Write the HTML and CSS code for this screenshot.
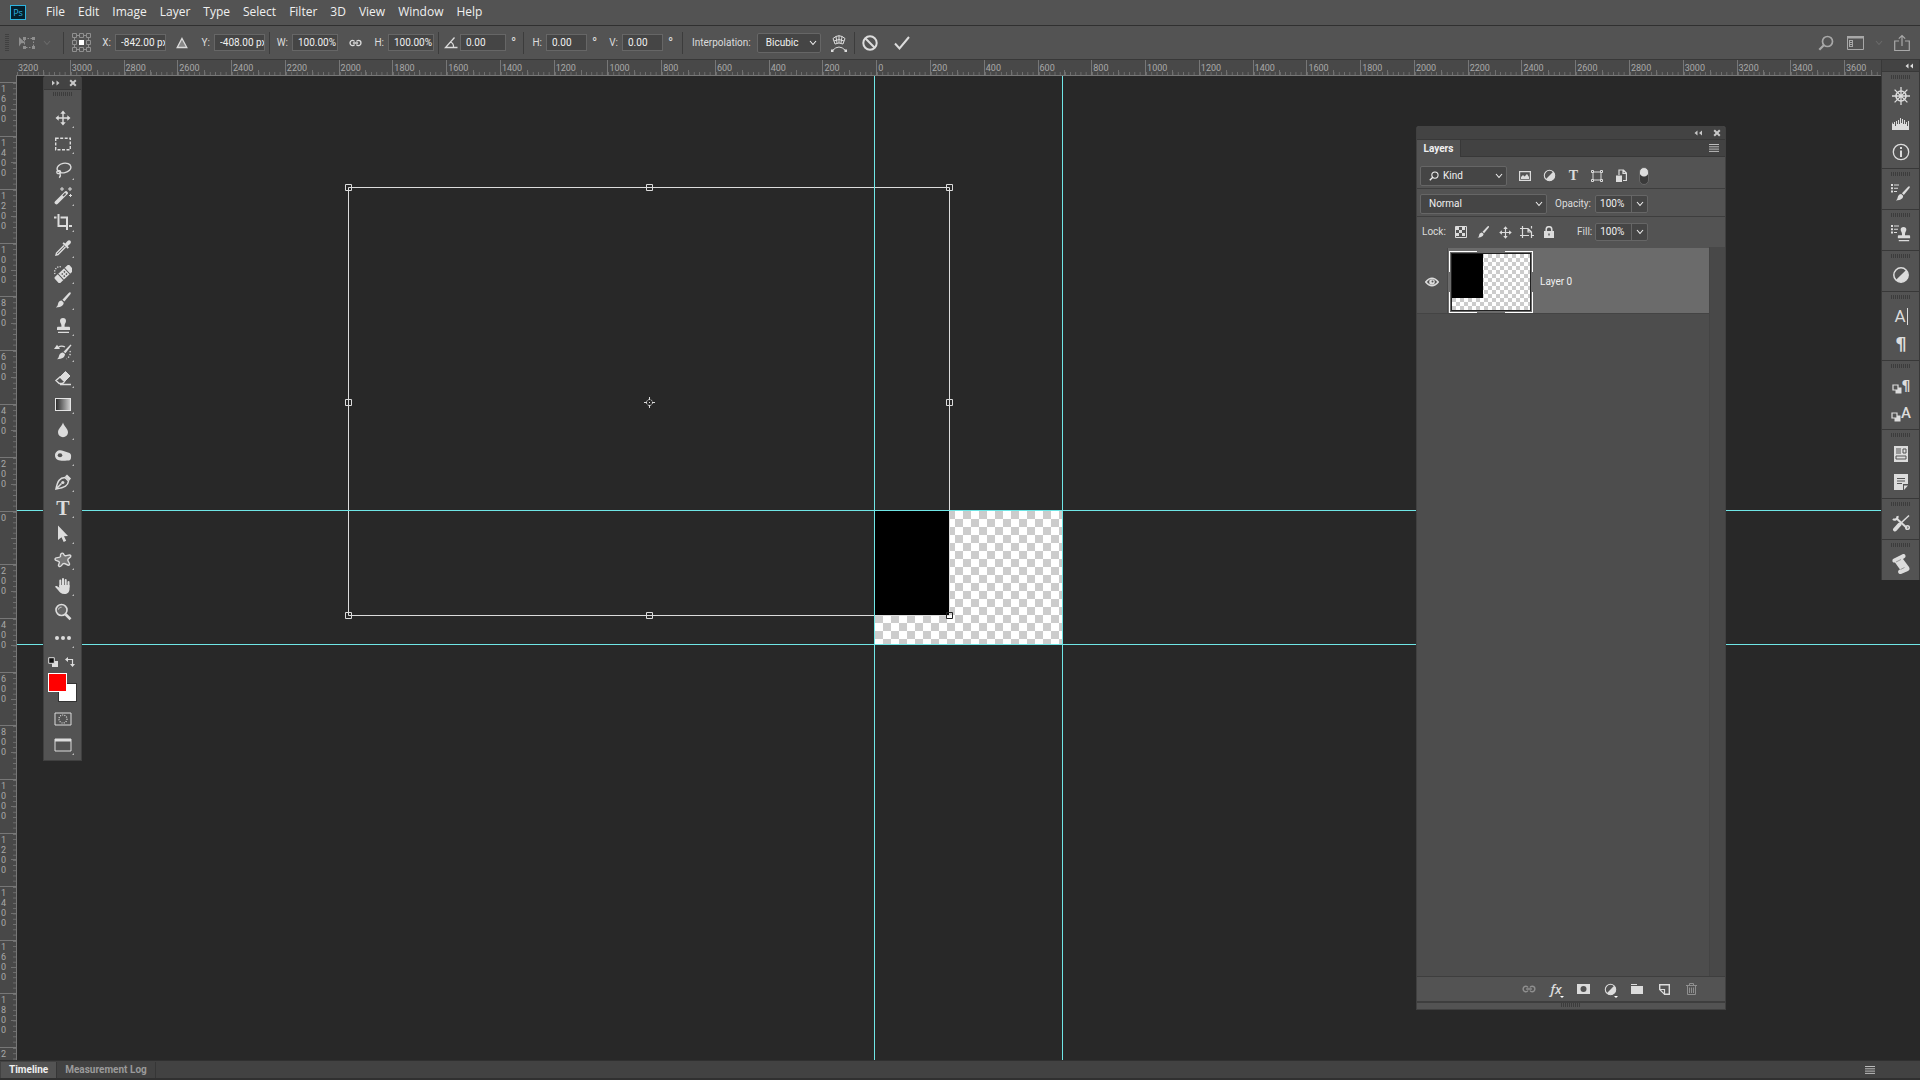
FILE: index.html
```html
<!DOCTYPE html>
<html lang="en">
<head>
  <meta charset="UTF-8">
  <meta name="viewport" content="width=device-width, initial-scale=1.0">
  <title>Photoshop</title>
  <link rel="stylesheet" href="styles.css">
</head>

<body>
  <!-- shared icons -->
  <svg class="sprite" aria-hidden="true">
    <symbol id="chevron" viewBox="0 0 8 6"><path d="M1 1l3 3.5L7 1" fill="none" stroke="currentColor" stroke-width="1.1"/></symbol>
    <symbol id="double" viewBox="0 0 8 6"><path d="M0 .5L3 3 0 5.500zM4.500 .5L7.500 3l-3 2.500z" fill="currentColor"/></symbol>
    <symbol id="close" viewBox="0 0 8 8"><path d="M1.200 1.200l5.600 5.600M6.800 1.200L1.200 6.800" stroke="currentColor" stroke-width="2"/></symbol>
    <symbol id="menu" viewBox="0 0 10 8"><path d="M0 .5h10M0 2.800h10M0 5.100h10M0 7.400h10" stroke="currentColor"/></symbol>
    <symbol id="move" viewBox="0 0 18 18"><path d="M9 3v12M3 9h12" stroke="currentColor" stroke-width="1.400"/><path d="M9 1.500l2.700 3.200H6.300zM9 16.500l2.700-3.200H6.300zM1.500 9l3.200-2.700v5.400zM16.500 9l-3.200-2.700v5.400z" fill="currentColor"/></symbol>
    <symbol id="brush" viewBox="0 0 18 18"><path d="M16.500 1.500c.6.600.2 1.200-.3 1.900l-5.800 7.200-2-1.900 6.300-6.700c.6-.6 1.300-1 1.800-.5zM7.600 9.500l2 1.900c.3 2.400-1.700 4.600-7.800 5 2-1.200 1.800-2.300 2.300-4 .4-1.700 2-2.900 3.500-2.900z" fill="currentColor"/></symbol>
    <symbol id="stamp" viewBox="0 0 18 18"><path d="M9 1a3 3 0 0 1 3 3c0 1.700-1.400 2.500-1.400 4.500v1.200h4.200c.8 0 1.200.5 1.200 1.200V13H3v-2.100c0-.7.5-1.200 1.200-1.200h3.200V8.500C7.400 6.500 6 5.700 6 4a3 3 0 0 1 3-3zM4 14.700h11v1.400H4z" fill="currentColor"/></symbol>
    <symbol id="half" viewBox="0 0 18 18"><circle cx="9" cy="9" r="7.200" fill="none" stroke="currentColor" stroke-width="1.500"/><path d="M14.100 3.900L3.900 14.100A7.200 7.200 0 0 0 14.100 3.900z" fill="currentColor"/></symbol>
    <symbol id="search" viewBox="0 0 16 16"><circle cx="9.500" cy="6.500" r="5" fill="none" stroke="currentColor" stroke-width="1.700"/><path d="M6 10l-4.700 4.700" stroke="currentColor" stroke-width="2.200"/></symbol>
    <symbol id="link" viewBox="0 0 14 8"><path d="M6 2.500C5.600 1.600 4.900 1.200 3.900 1.200a2.800 2.800 0 0 0 0 5.600c1 0 1.700-.4 2.100-1.300M8 2.500c.4-.9 1.100-1.300 2.100-1.300a2.800 2.800 0 0 1 0 5.600c-1 0-1.700-.4-2.100-1.300M4.200 4h5.600" fill="none" stroke="currentColor" stroke-width="1.400"/></symbol>
    <symbol id="copies" viewBox="0 0 10 10"><path d="M3.500 3.500H9.500v6h-6z" fill="currentColor"/><path d="M1 1h5v5H1z" fill="#535353" stroke="currentColor" stroke-width="1.200"/></symbol>
    <symbol id="list" viewBox="0 0 8 9"><path d="M0 0h2v2H0zM0 3.300h2v2H0zM0 6.600h2v2H0zM3 .5h5v1H3zM3 3.800h4v1H3zM3 7.100h3v1H3z" fill="currentColor"/></symbol>
  </svg>

  <nav class="menu-bar">
    <span class="app-logo">Ps</span>
    <button>File</button>
    <button>Edit</button>
    <button>Image</button>
    <button>Layer</button>
    <button>Type</button>
    <button>Select</button>
    <button>Filter</button>
    <button>3D</button>
    <button>View</button>
    <button>Window</button>
    <button>Help</button>
  </nav>

  <form class="options">
    <div class="group group-tool">
      <span class="v-grip"></span>
      <button type="button" class="dim" aria-label="Free transform">
        <svg width="18" height="16" viewBox="0 0 18 16"><path d="M1 2l6.500 6-4.300.3L1 11.500z" fill="currentColor"/><path d="M6.500 3.500h9v9h-9z" fill="none" stroke="currentColor" stroke-dasharray="1.500 1.500"/><path d="M5 2h3v3H5zM14 2h3v3h-3zM5 11h3v3H5zM14 11h3v3h-3z" fill="currentColor"/></svg>
      </button>
      <button type="button" class="faint" aria-label="Presets"><svg width="8" height="6"><use href="#chevron"/></svg></button>
    </div>

    <div class="group group-pos">
      <svg class="dim" width="21" height="21" viewBox="0 0 21 21" fill="none" stroke="currentColor"><path d="M1.500 1.500h4v4h-4zM8.500 1.500h4v4h-4zM15.500 1.500h4v4h-4zM1.500 8.500h4v4h-4zM15.500 8.500h4v4h-4zM1.500 15.500h4v4h-4zM8.500 15.500h4v4h-4zM15.500 15.500h4v4h-4zM6 3.500h2M13 3.500h2M6 17.500h2M13 17.500h2M3.500 6v2M17.500 6v2M3.500 13v2M17.500 13v2"/><path d="M8 8h5v5H8z" fill="#fff" stroke="none"/></svg>
      <div class="field"><label for="x">X:</label><input id="x" class="wide" value="-842.00 px"></div>
      <button type="button" aria-label="Relative positioning"><svg width="12" height="12" viewBox="0 0 12 12"><path d="M6 1.500l4.800 9H1.200z" fill="#888" stroke="currentColor" stroke-width="1.300"/></svg></button>
      <div class="field"><label for="y">Y:</label><input id="y" class="wide" value="-408.00 px"></div>
    </div>

    <div class="group group-size">
      <div class="field"><label for="w">W:</label><input id="w" class="mid" value="100.00%"></div>
      <button type="button" aria-label="Link size"><svg width="13" height="8"><use href="#link"/></svg></button>
      <div class="field"><label for="h">H:</label><input id="h" class="mid" value="100.00%"></div>
    </div>

    <div class="group group-angle">
      <svg width="14" height="12" viewBox="0 0 14 12"><path d="M10.500 .5L1.500 10.500h12M6.500 5c2.200.8 3.200 2.800 3 5.500" fill="none" stroke="currentColor" stroke-width="1.300"/></svg>
      <input class="mid" aria-label="Angle" value="0.00"><span class="degree">°</span>
    </div>

    <div class="group group-skew">
      <div class="field"><label for="skew-h">H:</label><input id="skew-h" value="0.00"><span class="degree">°</span></div>
      <div class="field"><label for="skew-v">V:</label><input id="skew-v" value="0.00"><span class="degree">°</span></div>
    </div>

    <div class="group group-interp">
      <label for="interp">Interpolation:</label>
      <span class="select"><select id="interp"><option>Bicubic</option></select><svg width="8" height="6"><use href="#chevron"/></svg></span>
      <button type="button" aria-label="Warp">
        <svg width="16" height="18" viewBox="0 0 16 18" fill="none" stroke="currentColor"><path d="M2 4.500Q8-1 14 4.500L12 10Q8 8 4 10zM8 1.500V9M5 2.500l1 6.500M11 2.500L10 9M3 7q5-3 10 0M1.500 16.500q6.500-7 13 0"/><path d="M0 15.500h2.500V18H0zM13.500 15.500H16V18h-2.500z" fill="currentColor" stroke="none"/></svg>
      </button>
    </div>

    <div class="group group-commit">
      <button type="button" aria-label="Cancel transform"><svg width="16" height="16" viewBox="0 0 16 16" fill="none" stroke="currentColor" stroke-width="2"><circle cx="8" cy="8" r="6.700"/><path d="M3.300 3.300l9.400 9.400"/></svg></button>
      <button type="button" aria-label="Commit transform"><svg width="16" height="16" viewBox="0 0 16 16"><path d="M1 8.500l4.500 5L15 2" fill="none" stroke="currentColor" stroke-width="2"/></svg></button>
    </div>

    <div class="options-right">
      <button type="button" aria-label="Search"><svg width="16" height="16"><use href="#search"/></svg></button>
      <button type="button" aria-label="Workspace"><svg width="17" height="14" viewBox="0 0 17 14"><path d="M.5 1h16v12.500H.5z" fill="none" stroke="currentColor"/><path d="M0 0h17v2.500H0zM2 4h4v7H2z" fill="currentColor"/><path d="M3 5h2v1H3zM3 7h2v1H3zM3 9h2v1H3z" fill="#535353"/></svg></button>
      <button type="button" class="faint" aria-label="Workspace menu"><svg width="8" height="6"><use href="#chevron"/></svg></button>
      <button type="button" aria-label="Share"><svg width="16" height="18" viewBox="0 0 16 18" fill="none" stroke="currentColor" stroke-width="1.200"><path d="M5 7H.7v9.500h14.600V7H11M8 12V1.500M4.800 4.700L8 1.500l3.200 3.200"/></svg></button>
    </div>
  </form>

  <main class="workspace">
    <div class="corner"></div>
    <div class="ruler ruler-x" id="rulerX"></div>
    <div class="ruler ruler-y" id="rulerY"></div>

    <div class="canvas">
      <div class="document"><div class="fill"></div></div>
      <svg class="transform-box" width="608" height="435" viewBox="0 0 608 435" fill="none" stroke="#dcdcdc">
        <path d="M3.500 3.500h601v428H3.500z"/>
        <path d="M.5 .5h6v6h-6zM301.500 .5h6v6h-6zM601.500 .5h6v6h-6zM.5 215.500h6v6h-6zM601.500 215.500h6v6h-6zM.5 428.500h6v6h-6zM301.500 428.500h6v6h-6z" />
        <path d="M601.500 428.500h6v6h-6z" stroke="#222"/>
        <circle cx="304.500" cy="218.500" r="3" stroke-dasharray="1.500 1"/>
        <path d="M299 218.500h3M307 218.500h3M304.500 213v3M304.500 221v3M304 218.500h1"/>
      </svg>
      <i class="guide guide-v guide-left"></i>
      <i class="guide guide-v guide-right"></i>
      <i class="guide guide-h guide-top"></i>
      <i class="guide guide-h guide-bottom"></i>
    </div>

    <!-- tools -->
    <aside class="tools">
      <div class="panel-head">
        <button aria-label="Expand tools"><svg width="8" height="6"><use href="#double"/></svg></button>
        <button aria-label="Close tools"><svg width="8" height="8"><use href="#close"/></svg></button>
      </div>
      <span class="grip"></span>
      <div class="tool-list">
        <button aria-label="Move"><svg width="18" height="18"><use href="#move"/></svg></button>
        <button aria-label="Marquee"><svg width="18" height="18" viewBox="0 0 18 18"><path d="M1.700 3.200h14.600v11.600H1.700z" fill="none" stroke="currentColor" stroke-width="1.400" stroke-dasharray="3 1.500"/></svg></button>
        <button aria-label="Lasso"><svg width="18" height="18" viewBox="0 0 18 18" fill="none" stroke="currentColor" stroke-width="1.400"><ellipse cx="10" cy="7" rx="7" ry="4.700" transform="rotate(-12 10 7)"/><path d="M4.500 9.500c-2 .5-2.300 2.500-.7 3 1.800.4 3.500-.6 2.700-2-.5-.9-1.500-.9-2-.6M6 12.500c.8 1.500.3 3-.7 4.300"/></svg></button>
        <button aria-label="Magic wand"><svg width="18" height="18" viewBox="0 0 18 18"><path d="M2.500 15.500L12 6" stroke="currentColor" stroke-width="3.800" stroke-linecap="round"/><path d="M9 9l2.600-2.600" stroke="#535353" stroke-width="1.500"/><path d="M8 0v4M6 2h4M16 0v4M14 2h4M16.500 7v3M15 8.500h3" stroke="currentColor"/></svg></button>
        <button aria-label="Crop"><svg width="18" height="18" viewBox="0 0 18 18"><path d="M0 4.500h2.500M4.500 1v12H13M6.500 4.500H13V17M15 13h3" fill="none" stroke="currentColor" stroke-width="2"/></svg></button>
        <button aria-label="Eyedropper"><svg width="18" height="18" viewBox="0 0 18 18"><path d="M10 6.500L2.500 14l-.5 2 2-.5L11.500 8" fill="none" stroke="currentColor" stroke-width="1.400"/><path d="M8.500 4.500l1.200-1.200 1.600 1.200 2.200-2.600c2.200-1.900 4.700.7 2.800 2.800l-2.600 2.200 1.200 1.600-1.200 1.200z" fill="currentColor"/></svg></button>
        <button aria-label="Healing brush"><svg width="18" height="18" viewBox="0 0 18 18"><g transform="rotate(-43 10 9)"><rect x="0" y="5" width="20" height="8" rx="1.500" fill="currentColor"/><path d="M5.700 5v8M14.300 5v8" stroke="#535353"/><path d="M8 7h1.500v1.500H8zM11 7h1.500v1.500H11zM8 10h1.500v1.500H8zM11 10h1.500v1.500H11z" fill="#535353"/></g><path d="M1 9C-.5 5 3 .5 7.500 2" fill="none" stroke="currentColor" stroke-width="1.300" stroke-dasharray="1.200 1.300"/></svg></button>
        <button aria-label="Brush"><svg width="18" height="18"><use href="#brush"/></svg></button>
        <button aria-label="Clone stamp"><svg width="18" height="18"><use href="#stamp"/></svg></button>
        <button aria-label="History brush"><svg width="18" height="18" viewBox="0 0 18 18"><path d="M16.500 1.500l1 .8-6 8-2-1.500zM9 9.500l2 1.600c0 3-2.500 5-8 5.200 2-1.200 1.500-2.500 2.300-4.300C6 10.400 7.500 9.300 9 9.500zM0 6h6L3 1.800z" fill="currentColor"/><path d="M4 4.500C6 3 9 3 11 4" fill="none" stroke="currentColor" stroke-width="1.300"/><path d="M16 8c1 3-.5 6-3.500 8" fill="none" stroke="currentColor" stroke-width="1.300" stroke-dasharray="1.300 1.700"/></svg></button>
        <button aria-label="Eraser"><svg width="18" height="18" viewBox="0 0 18 18"><path d="M11.500 2.500l4.500 4.500-5.500 5.500L6 8z" fill="currentColor" stroke="currentColor"/><path d="M6 8l4.500 4.500-2 2H5.200L2 11.500zM6 15.500h11" fill="none" stroke="currentColor" stroke-width="1.400"/></svg></button>
        <button aria-label="Gradient"><span class="gradient-icon"></span></button>
        <button aria-label="Blur"><svg width="18" height="18" viewBox="0 0 18 18"><path d="M9 1.500c1.200 4 5 6.200 5 9.700a5 5 0 0 1-10 0c0-3.500 3.800-5.700 5-9.700z" fill="currentColor"/></svg></button>
        <button aria-label="Dodge"><svg width="18" height="18" viewBox="0 0 18 18"><path d="M1 8.500C1 4 5.500 2 9.500 4l6 2c2 1 1.700 3 1.500 5-.3 2.500-2 2.700-4 2.500C7.500 14.500 1 13.500 1 8.500z" fill="currentColor"/><ellipse cx="6" cy="8.200" rx="2.300" ry="2" fill="#535353"/></svg></button>
        <button aria-label="Pen"><svg width="18" height="18" viewBox="0 0 18 18"><path d="M11 4.500l3.500 3.500c-.4 4.500-3.500 6.300-12.500 8C3.500 7.500 6 4.800 11 4.500zM2.500 15.500l5-5" fill="none" stroke="currentColor" stroke-width="1.500"/><circle cx="8.800" cy="9.500" r="1.600" fill="currentColor"/><path d="M11 3.500L13 1.500l4 4L15.200 7.700z" fill="currentColor"/></svg></button>
        <button aria-label="Type"><span class="type-icon">T</span></button>
        <button aria-label="Path selection"><svg width="18" height="18" viewBox="0 0 18 18"><path d="M4 0.500l10 10.500-4 .2 2.200 4.600-2.500 1.200-2.200-4.700L4 15z" fill="currentColor"/></svg></button>
        <button aria-label="Custom shape"><svg width="18" height="18" viewBox="0 0 18 18"><path d="M6.500 5.500C6 3 8 1 9.500 2.800c.8 1.200.5 2.200 2 2 2-.2 4.500-1.800 5.300 0 .5 2-3 2-3 4.200 0 1.700 2.800 3.300 1.500 5-1.700 1.300-3.500-1.800-5.500-1.500-2 .2-2.300 3.700-4.500 3-2.200-1 .5-3 0-4.500C4.800 9.600.7 10 1 7.800c.5-2 4.500-.3 5.500-2.300z" fill="#777" stroke="currentColor" stroke-width="1.400"/></svg></button>
        <button aria-label="Hand"><svg width="18" height="18" viewBox="0 0 18 18"><path d="M6.300 9.500V3.500M9 9V2M11.700 9V3M14.500 10V5" stroke="currentColor" stroke-width="2" stroke-linecap="round"/><path d="M5.300 8h10.200v4c0 3-2 5-5 5-3.500 0-5-2-6.500-4L1 9.800c.5-1.500 2.300-1 4.300 1z" fill="currentColor"/></svg></button>
        <button class="single" aria-label="Zoom"><svg width="18" height="18" viewBox="0 0 18 18"><circle cx="7.500" cy="7" r="5.500" fill="#666" stroke="currentColor" stroke-width="1.600"/><path d="M11.500 11.200l5 5" stroke="currentColor" stroke-width="2.700"/><path d="M4.500 6.500c.3-1.500 1.500-2.300 3-2.300" fill="none" stroke="currentColor"/></svg></button>
        <button aria-label="Edit toolbar"><svg width="18" height="18" viewBox="0 0 18 18" fill="currentColor"><circle cx="3" cy="9" r="2"/><circle cx="9" cy="9" r="2"/><circle cx="15" cy="9" r="2"/></svg></button>
      </div>
      <div class="swatch-actions">
        <button aria-label="Default colors"><svg width="10" height="10" viewBox="0 0 10 10"><path d="M4 4h6v6H4z" fill="#ddd"/><path d="M.7 .7h5.600v5.600H.7z" fill="#111" stroke="#ddd"/></svg></button>
        <button aria-label="Swap colors"><svg width="10" height="10" viewBox="0 0 10 10"><path d="M2 2.500h5.500V8" fill="none" stroke="currentColor" stroke-width="1.200"/><path d="M0 2.500L3 0v5zM7.500 10L5 7h5z" fill="currentColor"/></svg></button>
      </div>
      <div class="swatches">
        <button class="swatch foreground" aria-label="Foreground color"></button>
        <button class="swatch background" aria-label="Background color"></button>
      </div>
      <div class="tool-list">
        <button class="single" aria-label="Quick mask"><svg width="18" height="14" viewBox="0 0 18 14" fill="none" stroke="currentColor"><path d="M1 1h16v12H1z"/><circle cx="9" cy="7" r="4" stroke-dasharray="1 1.200" stroke-width="1.200"/></svg></button>
        <button aria-label="Screen mode"><svg width="18" height="14" viewBox="0 0 18 14"><path d="M1 1h16v12H1z" fill="none" stroke="currentColor"/><path d="M1 1h16v2.500H1z" fill="currentColor"/></svg></button>
      </div>
    </aside>

    <!-- layers -->
    <section class="layers">
      <div class="panel-head">
        <button aria-label="Collapse panel"><svg class="flip" width="8" height="6"><use href="#double"/></svg></button>
        <button aria-label="Close panel"><svg width="8" height="8"><use href="#close"/></svg></button>
      </div>
      <div class="tabs">
        <button class="tab active">Layers</button>
        <button class="tab-menu" aria-label="Panel menu"><svg width="10" height="8"><use href="#menu"/></svg></button>
      </div>
      <div class="row row-filter">
        <span class="select select-kind">
          <svg class="kind-icon" width="10" height="10"><use href="#search"/></svg>
          <select aria-label="Filter type"><option>Kind</option></select>
          <svg width="8" height="6"><use href="#chevron"/></svg>
        </span>
        <div class="filters">
          <button aria-label="Pixel layers"><svg width="12" height="10" viewBox="0 0 12 10"><path d="M.6 .6h10.800v8.800H.6z" fill="none" stroke="currentColor" stroke-width="1.200"/><path d="M2 8V6l2-2 1.500 1.500L8 3l2 3v2z" fill="currentColor"/></svg></button>
          <button aria-label="Adjustment layers"><svg width="13" height="13"><use href="#half"/></svg></button>
          <button aria-label="Type layers"><span class="type-icon small">T</span></button>
          <button aria-label="Shape layers"><svg width="12" height="12" viewBox="0 0 12 12" fill="none" stroke="currentColor"><path d="M2 2h8v8H2z"/><path d="M.5 .5h2v2h-2zM9.500 .5h2v2h-2zM.5 9.500h2v2h-2zM9.500 9.500h2v2h-2z" fill="#535353"/></svg></button>
          <button aria-label="Smart objects"><svg width="11" height="13" viewBox="0 0 11 13"><path d="M3 6V1h4.500L10.400 4v7.500H7M7 1v3.300h3" fill="none" stroke="currentColor" stroke-width="1.200"/><path d="M0 6.500h6V13H0z" fill="currentColor"/></svg></button>
          <button class="toggle" aria-label="Layer filtering"></button>
        </div>
      </div>
      <div class="row row-blend">
        <span class="select select-blend"><select aria-label="Blend mode"><option>Normal</option></select><svg width="8" height="6"><use href="#chevron"/></svg></span>
        <label for="opacity">Opacity:</label>
        <span class="percent"><input id="opacity" value="100%"><button aria-label="Opacity slider"><svg width="8" height="6"><use href="#chevron"/></svg></button></span>
      </div>
      <div class="row row-lock">
        <span class="lock-label">Lock:</span>
        <div class="locks">
          <button aria-label="Lock transparency"><svg width="12" height="12" viewBox="0 0 12 12"><path d="M.5 .5h11v11H.5z" fill="none" stroke="currentColor"/><path d="M1 1h3v3H1zM7 1h3v3H7zM4 4h3v3H4zM1 7h3v3H1zM7 7h3v3H7z" fill="currentColor"/></svg></button>
          <button aria-label="Lock pixels"><svg width="14" height="14"><use href="#brush"/></svg></button>
          <button aria-label="Lock position"><svg width="15" height="15"><use href="#move"/></svg></button>
          <button aria-label="Lock artboard"><svg width="14" height="12" viewBox="0 0 14 12" fill="none" stroke="currentColor" stroke-width="1.200"><path d="M0 2.500h2M2.500 0v2M2.500 12V2.500H8L11.500 6v6M11.500 0v2.500M12 9.500h2M0 9.500h9M8 2.500V6h3.500"/></svg></button>
          <button aria-label="Lock all"><svg width="10" height="12" viewBox="0 0 10 12"><path d="M0 5h10v7H0z" fill="currentColor"/><path d="M2.200 5V3.500a2.800 2.800 0 0 1 5.600 0V5" fill="none" stroke="currentColor" stroke-width="1.500"/><path d="M4.300 7.500h1.400v2H4.300z" fill="#535353"/></svg></button>
        </div>
        <label for="fill">Fill:</label>
        <span class="percent"><input id="fill" value="100%"><button aria-label="Fill slider"><svg width="8" height="6"><use href="#chevron"/></svg></button></span>
      </div>
      <div class="layer-list">
        <div class="layer">
          <button class="eye" aria-label="Toggle visibility"><svg width="14" height="10" viewBox="0 0 14 10"><path d="M.7 5Q7-2.500 13.300 5 7 12.500 .7 5z" fill="none" stroke="currentColor" stroke-width="1.500"/><circle cx="7" cy="5" r="2.800" fill="currentColor"/><circle cx="7.500" cy="4.500" r="1" fill="#535353"/></svg></button>
          <div class="layer-body">
            <div class="thumb-frame"><div class="thumb"><div class="fill"></div></div></div>
            <span>Layer 0</span>
          </div>
        </div>
        <div class="scroll-track"></div>
      </div>
      <div class="layer-actions">
        <button class="dim" aria-label="Link layers"><svg width="14" height="8"><use href="#link"/></svg></button>
        <button class="more" aria-label="Layer style"><span class="fx">fx</span></button>
        <button aria-label="Add mask"><svg width="13" height="10" viewBox="0 0 13 10"><path d="M0 0h13v10H0z" fill="currentColor"/><circle cx="6.500" cy="5" r="3" fill="#535353"/></svg></button>
        <button class="more" aria-label="New adjustment"><svg width="13" height="13"><use href="#half"/></svg></button>
        <button aria-label="New group"><svg width="12" height="10" viewBox="0 0 12 10"><path d="M0 0h6v1H0zM0 2h12v8H0z" fill="currentColor"/></svg></button>
        <button aria-label="New layer"><svg width="11" height="11" viewBox="0 0 11 11"><path d="M.7 5V.7h9.600v9.600H5.500" fill="none" stroke="currentColor" stroke-width="1.400"/><path d="M.7 5.500h4.800v4.800z" fill="none" stroke="currentColor" stroke-width="1.200"/></svg></button>
        <button class="dim" aria-label="Delete layer"><svg width="11" height="12" viewBox="0 0 11 12" fill="none" stroke="currentColor"><path d="M0 2.500h11M3.500 2V.5h4V2M1.500 3v8.500h8V3M3.500 4.500v5.500M5.500 4.500v5.500M7.500 4.500v5.500"/></svg></button>
      </div>
      <div class="resize"><span class="grip"></span></div>
    </section>

    <!-- collapsed panels -->
    <aside class="dock">
      <div class="dock-head"><button aria-label="Expand panels"><svg class="flip" width="8" height="6"><use href="#double"/></svg></button></div>
      <div class="dock-group">
        <span class="grip"></span>
        <button aria-label="Navigator"><svg width="18" height="18" viewBox="0 0 18 18" fill="none" stroke="currentColor"><circle cx="9" cy="9" r="5" stroke-width="1.600"/><path d="M9 0v18M0 9h18M2.600 2.600l12.800 12.800M15.400 2.600L2.600 15.400" stroke-width="1.300"/></svg></button>
        <button aria-label="Histogram"><svg width="18" height="12" viewBox="0 0 18 12"><path d="M0 12V6l1-2v2h1V4h1v4h1V3h1v3h1V2h1v4h1V0h1v5h1V1h1v5h1V2h1v4h1V4h1v4h1V3h1v9z" fill="currentColor"/></svg></button>
        <button aria-label="Info"><svg width="18" height="18" viewBox="0 0 18 18"><circle cx="9" cy="9" r="7.700" fill="none" stroke="currentColor" stroke-width="1.300"/><path d="M8 4h2v2H8zM8 7.500h2V14H8z" fill="currentColor"/></svg></button>
      </div>
      <div class="dock-group">
        <span class="grip"></span>
        <button aria-label="Brush settings"><svg width="20" height="18" viewBox="0 0 20 18"><use href="#list" width="8" height="9"/><use href="#brush" x="3" y="1" width="17" height="17"/></svg></button>
      </div>
      <div class="dock-group">
        <span class="grip"></span>
        <button aria-label="Clone source"><svg width="20" height="18" viewBox="0 0 20 18"><use href="#list" width="8" height="9"/><use href="#stamp" x="4" y="1" width="17" height="17"/></svg></button>
      </div>
      <div class="dock-group">
        <span class="grip"></span>
        <button aria-label="Adjustments"><svg width="18" height="18"><use href="#half"/></svg></button>
      </div>
      <div class="dock-group">
        <span class="grip"></span>
        <button aria-label="Character"><span class="char-icon">A</span></button>
        <button aria-label="Paragraph"><span class="para-icon">¶</span></button>
      </div>
      <div class="dock-group">
        <span class="grip"></span>
        <button aria-label="Paragraph styles"><svg class="copies" width="10" height="10"><use href="#copies"/></svg><span class="para-icon small">¶</span></button>
        <button aria-label="Character styles"><svg class="copies" width="10" height="10"><use href="#copies"/></svg><span class="style-icon">A</span></button>
      </div>
      <div class="dock-group">
        <span class="grip"></span>
        <button aria-label="Libraries"><svg width="14" height="16" viewBox="0 0 14 16"><path d="M0 0h14v16H0z" fill="currentColor"/><path d="M2 3h5M2 5h5M2 7h5M9 3h3v4H9zM2 10h10v3H2z" stroke="#535353" fill="none"/></svg></button>
        <button aria-label="Notes"><svg width="14" height="16" viewBox="0 0 14 16"><path d="M0 0h14v10h-5v6H0zM14 11.500L10 16v-4.500z" fill="currentColor"/><path d="M3 4.500h8M3 7h8M3 9.500h5" stroke="#535353"/></svg></button>
      </div>
      <div class="dock-group">
        <span class="grip"></span>
        <button aria-label="Tool presets"><svg width="18" height="18" viewBox="0 0 18 18" fill="none" stroke="currentColor"><path d="M4 4l11 10" stroke-width="2"/><path d="M1 5c1.500 1.500 5 .5 4.500-3" stroke-width="2.200"/><circle cx="15.500" cy="13.500" r="1.800" stroke-width="1.500"/><path d="M17 1.500L9 9" stroke-width="1.500"/><path d="M7.500 10.500L3 15.500" stroke-width="4" stroke-linecap="round"/></svg></button>
      </div>
      <div class="dock-group">
        <span class="grip"></span>
        <button aria-label="Scripts"><svg width="18" height="20" viewBox="0 0 18 20"><path d="M1 5l10-5c2.500-.5 3.500 3 1.500 4L11 5l6 8c1 2 .5 3-1 4l-7 3c-2.500.5-4-2.500-2-4l1-.5L3 8.500C0 9 0 6 1 5z" fill="currentColor"/><path d="M4 8l5-2.500M8.500 15.500l4-2" stroke="#999" fill="none"/></svg></button>
      </div>
    </aside>
  </main>

  <footer class="bottom-bar">
    <button class="bottom-tab active">Timeline</button>
    <button class="bottom-tab">Measurement Log</button>
    <button class="bottom-menu" aria-label="Timeline menu"><svg width="10" height="8"><use href="#menu"/></svg></button>
  </footer>

  <script>
    // one cell for every 200 document pixels
    function fillRuler(id, from, to) {
      const ruler = document.getElementById(id);
      for (let value = from; value <= to; value += 200) {
        const cell = document.createElement('div');
        const label = document.createElement('span');
        cell.className = 'cell';
        label.textContent = Math.abs(value);
        cell.appendChild(label);
        ruler.appendChild(cell);
      }
    }

    fillRuler('rulerX', -3200, 3600);
    fillRuler('rulerY', -1600, 2000);
  </script>
</body>
</html>
```
FILE: styles.css
```css
* {
  box-sizing: border-box;
}

body {
  margin: 0;
  height: 100vh;
  display: flex;
  flex-direction: column;
  overflow: hidden;
  background: #282828;
  color: #dcdcdc;
  font-family: Roboto, "Liberation Sans", sans-serif;
  font-size: 10px;
  line-height: 14px;
}

button,
input,
select {
  font: inherit;
  color: inherit;
  margin: 0;
  padding: 0;
  border: 0;
  background: none;
}

button {
  display: flex;
  align-items: center;
  justify-content: center;
}

svg {
  display: block;
  flex: none;
}

.sprite {
  position: absolute;
  width: 0;
  height: 0;
}

.flip {
  transform: scaleX(-1);
}

.dim {
  color: #8f8f8f;
}

.faint {
  color: #6a6a6a;
}

/* menu */
.menu-bar {
  display: flex;
  align-items: center;
  gap: 13px;
  height: 26px;
  padding: 0 10px 1px;
  background: #535353;
  border-bottom: 1px solid #303030;
  font-family: "Open Sans", "Noto Sans", sans-serif;
  font-size: 12px;
  color: #f0f0f0;
}

.app-logo {
  width: 16px;
  height: 15px;
  margin-right: 7px;
  border: 1px solid #2fb4e0;
  background: #04202e;
  color: #2fb4e0;
  font-size: 9px;
  line-height: 13px;
  text-align: center;
}

/* options bar */
.options {
  display: flex;
  align-items: center;
  height: 34px;
  background: #535353;
  border-bottom: 1px solid #383838;
}

.group {
  display: flex;
  align-items: center;
  gap: 7px;
  height: 22px;
  border-left: 1px solid #3c3c3c;
}

.group-tool {
  width: 63px;
  padding-left: 5px;
  border: 0;
}

.group-tool .dim {
  margin-left: 2px;
}

.v-grip {
  width: 4px;
  height: 18px;
  background: repeating-linear-gradient(#404040 0 1px, transparent 1px 2px);
}

.group-pos {
  padding: 0 4px 0 7px;
}

.group-size {
  padding: 0 4px 0 6px;
}

.group-size button {
  width: 20px;
}

.group-pos button {
  width: 18px;
}

.group-angle {
  gap: 0;
  padding: 0 0 0 5px;
}

.group-angle svg {
  margin-right: 2px;
}

.group-skew {
  gap: 2px;
  padding: 0 2px 0 6px;
}

.group-interp {
  gap: 6px;
  padding: 0 7px 0 9px;
}

.group-interp .select {
  width: 64px;
}

.group-interp button {
  margin-left: 4px;
}

.group-commit {
  gap: 16px;
  padding-left: 7px;
}

.field {
  display: flex;
  align-items: center;
}

.field label {
  width: 12px;
  margin-right: 4px;
  text-align: right;
}

.options input {
  width: 41px;
  height: 17px;
  padding: 0 0 0 5px;
  background: #454545;
  border: 1px solid #666;
  color: #f0f0f0;
}

.options input.mid {
  width: 46px;
}

.options input.wide {
  width: 51px;
}

.degree {
  width: 12px;
  margin-left: 5px;
  font-size: 14px;
}

.select {
  display: flex;
  align-items: center;
  height: 20px;
  padding: 0 3px 0 8px;
  background: #454545;
  border: 1px solid #666;
  border-radius: 2px;
  color: #f0f0f0;
}

.select select {
  flex: 1;
  min-width: 0;
  appearance: none;
}

.options-right {
  display: flex;
  align-items: center;
  margin-left: auto;
  gap: 11px;
  padding-right: 10px;
  color: #a8a8a8;
}

.options-right button:first-child {
  margin-right: 2px;
}

.options-right .faint {
  color: #6a6a6a;
}

/* workspace */
.workspace {
  position: relative;
  flex: 1;
  min-height: 0;
  display: grid;
  grid-template-columns: 17px 1fr;
  grid-template-rows: 16px 1fr;
}

.corner {
  background: #484848;
}

.ruler {
  display: flex;
  overflow: hidden;
  background: #484848;
  color: #a8a8a8;
  font-size: 9px;
  line-height: 10px;
}

.ruler-x {
  margin-left: -1px;
  margin-right: 38px;
  border-bottom: 1px solid #777;
}

.ruler-x .cell {
  flex: none;
  width: calc(100% / 34.7);
  padding: 3px 0 0 1px;
  border-left: 1px solid #777;
  background:
    linear-gradient(#707070, #707070) 50% 100% / 1px 5px no-repeat,
    linear-gradient(90deg, #707070 1px, transparent 1px) 0 100% / 10% 3px repeat-x;
}

.ruler-x .cell:first-child {
  border-color: transparent;
}

.ruler-y {
  flex-direction: column;
  padding-top: 6px;
  border-right: 1px solid #777;
}

.ruler-y .cell {
  flex: none;
  height: calc(100% / 18.240);
  padding: 1px 0 0 1px;
  border-top: 1px solid #777;
  background:
    linear-gradient(#707070, #707070) 100% 50% / 5px 1px no-repeat,
    linear-gradient(#707070 1px, transparent 1px) 100% 0 / 3px 10% repeat-y;
}

.ruler-y span {
  display: block;
  width: 6px;
  word-break: break-all;
}

.canvas {
  position: relative;
  overflow: hidden;
  background: #282828;
}

.guide {
  position: absolute;
  background: #6fe6e6;
}

.guide-v {
  top: 0;
  bottom: 0;
  width: 1px;
}

.guide-h {
  left: 0;
  right: 0;
  height: 1px;
}

.guide-left {
  left: 857px;
}

.guide-right {
  left: 1045px;
}

.guide-top {
  top: 434px;
}

.guide-bottom {
  top: 568px;
}

.document {
  position: absolute;
  left: 858px;
  top: 435px;
  width: 187px;
  height: 133px;
  background: repeating-conic-gradient(#ccc 0 25%, #fff 0 50%) 0 0 / 16px 16px;
}

.fill {
  background: #000;
}

.document .fill {
  width: 74px;
  height: 104px;
}

.transform-box {
  position: absolute;
  left: 328px;
  top: 108px;
}

/* floating panels */
.panel-head {
  display: flex;
  align-items: center;
  height: 14px;
  padding-top: 1px;
  background: #434343;
  border-bottom: 1px solid #383838;
  border-radius: 3px 3px 0 0;
  color: #c8c8c8;
}

.grip {
  display: block;
  width: 20px;
  height: 4px;
  margin: 0 auto;
  background: repeating-linear-gradient(90deg, #3c3c3c 0 1px, transparent 1px 2px);
}

.tools {
  position: absolute;
  left: 43px;
  top: 16px;
  width: 39px;
  padding-bottom: 2px;
  background: #535353;
  border: 1px solid #404040;
  border-top: 0;
  border-radius: 3px 3px 0 0;
}

.tools .panel-head {
  justify-content: space-between;
  padding: 1px 4px 0 8px;
}

.tools > .grip {
  margin: 2px auto 9px;
}

.tool-list button {
  position: relative;
  width: 100%;
  height: 26px;
}

.tool-list button::after {
  content: "";
  position: absolute;
  right: 7px;
  bottom: 3px;
  border: 1px solid #bbb;
  border-left-color: transparent;
  border-top-color: transparent;
}

.tool-list .single::after {
  display: none;
}

.gradient-icon {
  width: 16px;
  height: 13px;
  border: 1px solid #e4e4e4;
  background: linear-gradient(90deg, #2c2c2c, #ccc);
}

.type-icon {
  padding-left: 1px;
  font-family: "Liberation Serif", serif;
  font-weight: bold;
  font-size: 20px;
  line-height: 20px;
}

.type-icon.small {
  font-size: 14px;
}

.swatch-actions {
  display: flex;
  gap: 7px;
  padding: 6px 0 6px 4px;
}

.swatches {
  display: grid;
  grid-template-columns: 10px 9px 10px;
  grid-template-rows: 10px 9px 10px;
  padding: 0 0 4px 4px;
}

.swatch {
  border: 1px solid #fff;
  outline: 1px solid #333;
  outline-offset: -1px;
}

.foreground {
  grid-area: 1 / 1 / 3 / 3;
  z-index: 1;
  background: #f00;
  outline: 0;
}

.background {
  grid-area: 2 / 2 / 4 / 4;
  background: #fff;
}

/* layers panel */
.layers {
  position: absolute;
  top: 66px;
  right: 194px;
  bottom: 50px;
  width: 310px;
  display: flex;
  flex-direction: column;
  background: #535353;
  border: 1px solid #404040;
  border-top: 0;
  border-radius: 3px 3px 0 0;
}

.layers .panel-head {
  justify-content: flex-end;
  gap: 11px;
  padding-right: 4px;
}

.tabs {
  display: flex;
  justify-content: space-between;
  height: 17px;
  background: #424242;
  border-bottom: 1px solid #383838;
}

.tab {
  width: 44px;
  height: 17px;
  background: #535353;
  border-right: 1px solid #383838;
  color: #f0f0f0;
  font-weight: bold;
}

.tab-menu {
  padding-right: 6px;
  color: #bbb;
}

.row {
  display: flex;
  align-items: center;
  padding-left: 3px;
}

.row-filter {
  height: 32px;
  padding-top: 6px;
  border-bottom: 1px solid #3e3e3e;
}

.select-kind {
  width: 87px;
}

.kind-icon {
  margin-right: 4px;
}

.filters {
  display: flex;
  gap: 4px;
  margin-left: 8px;
}

.filters button {
  width: 20px;
  height: 18px;
}

.filters .toggle {
  width: 10px;
  height: 18px;
  margin-left: 4px;
  border: 1px solid #666;
  border-radius: 5px;
  background: radial-gradient(circle at 4px 4px, #ddd 4px, #3a3a3a 5px);
}

.row-blend {
  height: 28px;
  padding-top: 2px;
  border-bottom: 1px solid #3e3e3e;
}

.select-blend {
  width: 127px;
  margin-right: 8px;
}

.percent {
  display: flex;
  height: 18px;
  margin-left: 4px;
  border: 1px solid #666;
  border-radius: 2px;
  background: #454545;
  color: #f0f0f0;
}

.percent input {
  width: 36px;
  padding-left: 4px;
  border-right: 1px solid #666;
}

.percent button {
  width: 15px;
}

.row-lock {
  height: 30px;
}

.lock-label {
  width: 31px;
  padding-left: 2px;
}

.locks {
  display: flex;
  gap: 2px;
  width: 126px;
}

.locks button {
  width: 20px;
}

.row-lock .percent {
  margin-left: 3px;
}

.layer-list {
  flex: 1;
  display: grid;
  grid-template-columns: 1fr 16px;
  background: #4d4d4d;
}

.scroll-track {
  background: #484848;
  border-left: 1px solid #444;
}

.layer {
  display: flex;
  height: 67px;
  padding-top: 1px;
  background: #535353;
  border-bottom: 1px solid #444;
}

.eye {
  width: 31px;
  padding-top: 3px;
  border-right: 1px solid #484848;
}

.layer-body {
  flex: 1;
  display: flex;
  align-items: center;
  gap: 7px;
  padding: 2px 0 0 1px;
  background: #6b6b6b;
  color: #f0f0f0;
}

/* white brackets only at the corners */
.thumb-frame {
  width: 84px;
  height: 62px;
  padding: 2px;
  background:
    linear-gradient(90deg, #fff 28px, transparent 28px 56px, #fff 56px) 0 0 / 100% 1px no-repeat,
    linear-gradient(90deg, #fff 28px, transparent 28px 56px, #fff 56px) 0 100% / 100% 1px no-repeat,
    linear-gradient(#fff 21px, transparent 21px 41px, #fff 41px) 0 0 / 1px 100% no-repeat,
    linear-gradient(#fff 21px, transparent 21px 41px, #fff 41px) 100% 0 / 1px 100% no-repeat;
}

.thumb {
  height: 58px;
  border: 1px solid #222;
  background: repeating-conic-gradient(#ccc 0 25%, #fff 0 50%) 0 0 / 8px 8px;
}

.thumb .fill {
  width: 31px;
  height: 44px;
}

.layer-actions {
  display: flex;
  justify-content: flex-end;
  gap: 7px;
  height: 25px;
  padding-right: 24px;
  border-top: 1px solid #3e3e3e;
}

.layer-actions button {
  position: relative;
  width: 20px;
}

.more::after {
  content: "";
  position: absolute;
  right: 2px;
  bottom: 3px;
  border: 2px solid transparent;
  border-top-color: #fff;
  border-bottom: 0;
}

.fx {
  font-family: "Open Sans", sans-serif;
  font-style: italic;
  font-weight: 600;
  font-size: 13px;
}

.resize {
  height: 8px;
  border-top: 2px solid #3e3e3e;
}

/* dock */
.dock {
  position: absolute;
  top: 0;
  right: 0;
  width: 39px;
  background: #535353;
  border-left: 1px solid #383838;
  border-right: 1px solid #383838;
}

.dock-head {
  display: flex;
  justify-content: flex-end;
  height: 11px;
  padding-right: 6px;
  background: #434343;
}

.dock-group {
  padding: 3px 0 2px 1px;
  border-top: 1px solid #383838;
}

.dock-group .grip {
  margin-bottom: 3px;
}

.dock-group button {
  width: 100%;
  height: 28px;
}

.char-icon {
  padding-right: 1px;
  border-right: 1px solid #dcdcdc;
  font-size: 17px;
  line-height: 17px;
}

.para-icon {
  font-family: "DejaVu Sans", sans-serif;
  font-weight: bold;
  font-size: 18px;
  line-height: 18px;
}

.para-icon.small {
  font-size: 14px;
}

.copies {
  align-self: flex-end;
  margin-bottom: 5px;
}

.style-icon {
  font-size: 15px;
  font-weight: 500;
}

/* bottom */
.bottom-bar {
  display: flex;
  height: 20px;
  padding: 1px 0 0 1px;
  background: #424242;
  border-top: 1px solid #303030;
  border-bottom: 2px solid #303030;
}

.bottom-tab {
  padding: 0 8px;
  border-right: 1px solid #363636;
  color: #9a9a9a;
  font-weight: bold;
}

.bottom-tab.active {
  background: #535353;
  color: #f0f0f0;
}

.bottom-menu {
  margin-left: auto;
  padding-right: 45px;
  color: #bbb;
}
```
